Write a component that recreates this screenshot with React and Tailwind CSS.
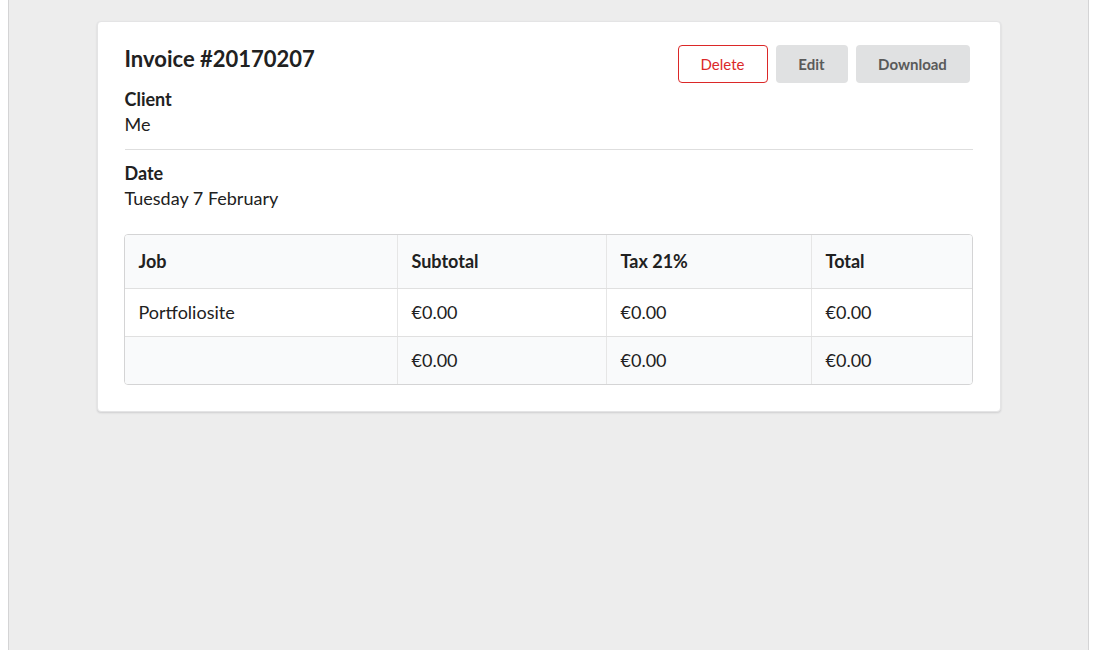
export default function App() {
  const rows = [
    ["Portfoliosite", "€0.00", "€0.00", "€0.00"],
  ];
  const cols = "grid grid-cols-[272px_209px_205px_1fr]";
  return (
    <div className="w-[1098px] h-[650px] bg-white pl-2 pr-[9px] text-[#212121]" style={{ fontFamily: "Lato, 'Open Sans', sans-serif" }}>
      <div className="h-[650px] bg-[#ededed] border-x border-[#d4d4d5] pt-[21px]">
        <div className="mx-auto w-[904px] bg-white rounded-[4px] shadow-[0_1px_2px_0_rgba(34,36,38,0.15)] border border-[#e4e4e5] px-[27px] pt-[20px] pb-[26px]">
          <div className="flex items-start justify-between">
            <h1 className="text-[22px] leading-[33px] font-bold">Invoice #20170207</h1>
            <div className="flex mt-[3px] mr-[3px] gap-2">
              <button className="h-[38px] w-[90px] rounded-[4px] border border-[#db2828] text-[#db2828] text-[15px] bg-white">Delete</button>
              <button className="h-[38px] w-[72px] rounded-[4px] bg-[#e0e1e2] text-[#5a5a5a] text-[15px] font-bold">Edit</button>
              <button className="h-[38px] w-[114px] rounded-[4px] bg-[#e0e1e2] text-[#5a5a5a] text-[15px] font-bold">Download</button>
            </div>
          </div>
          <div className="mt-[5px] text-[18px] font-bold leading-[23px]">Client</div>
          <div className="text-[18px] leading-[27px]">Me</div>
          <div className="mt-[11px] border-t border-[#dedede]" />
          <div className="mt-[12px] text-[18px] font-bold leading-[23px]">Date</div>
          <div className="text-[18px] leading-[27px]">Tuesday 7 February</div>
          <div className="mt-[22px] -ml-px border border-[#d4d4d5] rounded-[4px] overflow-hidden text-[18px]">
            <div className={`${cols} bg-[#f9fafb] h-[54px] border-b border-[#e0e0e0] font-bold`}>
              {["Job", "Subtotal", "Tax 21%", "Total"].map((h, i) => (
                <div key={h} className={`flex items-center px-[14px] ${i > 0 ? "border-l border-[#e6e6e6]" : ""}`}>{h}</div>
              ))}
            </div>
            {rows.map((r, ri) => (
              <div key={ri} className={`${cols} bg-white h-[48px] border-b border-[#e0e0e0]`}>
                {r.map((c, i) => (
                  <div key={i} className={`flex items-center px-[14px] ${i > 0 ? "border-l border-[#e6e6e6]" : ""}`}>{c}</div>
                ))}
              </div>
            ))}
            <div className={`${cols} bg-[#f9fafb] h-[47px]`}>
              {["", "€0.00", "€0.00", "€0.00"].map((c, i) => (
                <div key={i} className={`flex items-center px-[14px] ${i > 0 ? "border-l border-[#e6e6e6]" : ""}`}>{c}</div>
              ))}
            </div>
          </div>
        </div>
      </div>
    </div>
  );
}
